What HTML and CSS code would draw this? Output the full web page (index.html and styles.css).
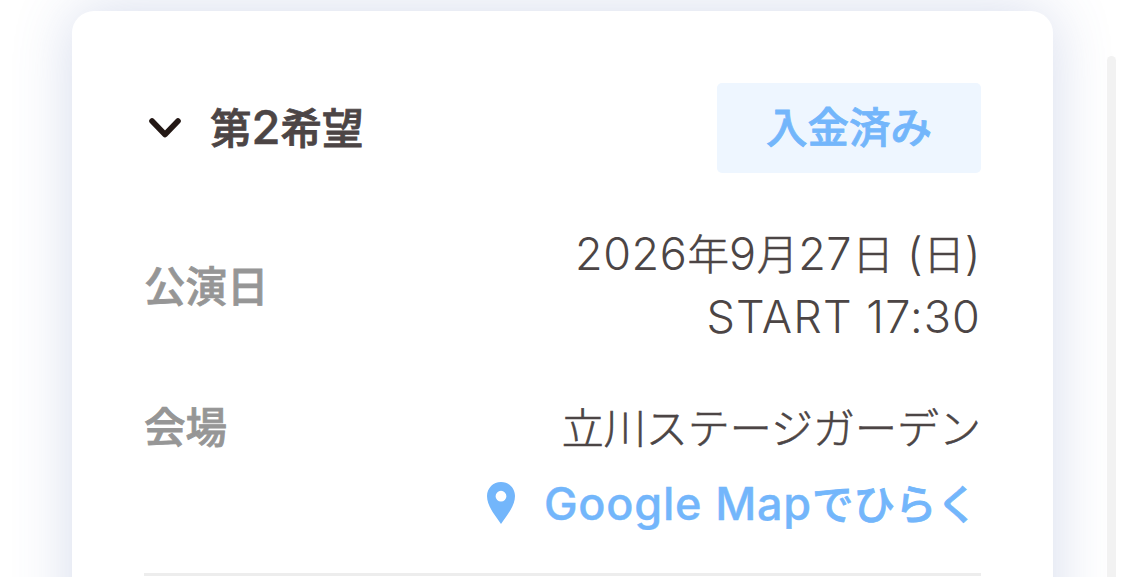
FILE: index.html
```
<!DOCTYPE html>
<html lang="ja">
<head>
  <meta charset="UTF-8" />
  <meta name="viewport" content="width=device-width, initial-scale=1.0"/>
  <title>申込状況</title>
  <link rel="stylesheet" href="styles.css">
</head>
<body>

  <div class="card">
    <div class="card-header">
      <div class="choice">
        <svg class="chevron" viewBox="0 0 32 20" width="32" height="20">
          <path d="M3 3 L16 16.500 L29 3" fill="none" stroke="#231815" stroke-width="5.600" stroke-linecap="round" stroke-linejoin="round"/>
        </svg>
        <h2>第<span class="latin">2</span>希望</h2>
      </div>
      <span class="status">入金済み</span>
    </div>

    <div class="row">
      <div class="label">公演日</div>
      <div class="value date">
        <p class="day"><span class="latin">2026</span>年<span class="latin">9</span>月<span class="latin">27</span>日<span class="latin"> (</span>日<span class="latin">)</span></p>
        <p class="start"><span class="latin">START 17:30</span></p>
      </div>
    </div>

    <div class="row venue-row">
      <div class="label">会場</div>
      <div class="value venue">立川ステージガーデン</div>
    </div>

    <a class="map-link" href="#">
      <svg class="pin" viewBox="0 0 28 42" width="28" height="42">
        <path fill="#73b6fb" fill-rule="evenodd" d="M14 0C6.200 0 0 6.200 0 14C0 23.500 7 32 14 42C21 32 28 23.500 28 14C28 6.200 21.800 0 14 0ZM14 8.800A5.400 5.400 0 1 1 14 19.600A5.400 5.400 0 1 1 14 8.800Z"/>
      </svg>
      <span class="map-text"><span class="latin">Google Map</span>でひらく</span>
    </a>
  </div>

  <div class="scrollbar"></div>

</body>
</html>
```
FILE: styles.css
```
* {
  box-sizing: border-box;
}

body {
  margin: 0;
  height: 577px;
  overflow: hidden;
  padding: 11px 9px 0 72px;
  display: flex;
  justify-content: space-between;
  background: #fff;
  color: #4c4545;
  font-family: "Noto Sans CJK JP", sans-serif;
  font-size: 41.5px;
}

h2,
p {
  margin: 0;
}

.latin {
  font-family: Inter, sans-serif;
  font-size: 45px;
  line-height: 1;
  -webkit-text-stroke: 0;
}

.card {
  width: 981px;
  height: 640px;
  flex: none;
  padding: 72px 72px 0;
  border-radius: 22px;
  background: #fff;
  box-shadow: 0 0 60px rgba(80, 105, 175, 0.24);
}

.card-header {
  display: flex;
  justify-content: space-between;
  align-items: center;
}

.choice {
  display: flex;
  align-items: center;
  gap: 29px;
  padding-left: 5px;
}

.choice h2 {
  font-size: 41.5px;
  line-height: 60px;
  font-weight: 500;
  padding-bottom: 5px;
  -webkit-text-stroke: 0.8px;
}

.choice .latin {
  font-size: 47px;
  font-weight: 500;
  -webkit-text-stroke: 0.5px;
}

.status {
  width: 264px;
  height: 90px;
  line-height: 85px;
  border-radius: 5px;
  text-align: center;
  background: #eef6ff;
  color: #73b6fb;
  font-weight: 500;
  -webkit-text-stroke: 0.8px;
}

.row {
  display: flex;
  justify-content: space-between;
  align-items: center;
  margin-top: 48px;
  line-height: 63px;
}

.label {
  color: #969696;
  font-weight: 500;
  -webkit-text-stroke: 0.8px;
}

.value {
  font-weight: 300;
  text-align: right;
  -webkit-text-stroke: 0.6px;
}

.value .latin {
  font-weight: 320;
}

.day .latin {
  letter-spacing: 0.6px;
}

.start .latin {
  letter-spacing: 1.1px;
}

.venue {
  font-size: 42px;
}

.venue-row {
  margin-top: 47px;
}

.map-link {
  display: flex;
  justify-content: flex-end;
  align-items: center;
  gap: 29px;
  margin-top: 14px;
  padding: 0 3px 38px 0;
  border-bottom: 3px solid #ededed;
  line-height: 63px;
  color: #73b6fb;
  font-weight: 500;
  text-decoration: none;
}

.map-link .latin {
  font-weight: 500;
  letter-spacing: 0.8px;
  -webkit-text-stroke: 0.4px;
}

.map-text {
  padding-bottom: 1px;
  -webkit-text-stroke: 0.8px;
}

.scrollbar {
  width: 9px;
  height: 521px;
  margin-top: 45px;
  border-radius: 5px 5px 0 0;
  background: #f2f2f2;
}
```
